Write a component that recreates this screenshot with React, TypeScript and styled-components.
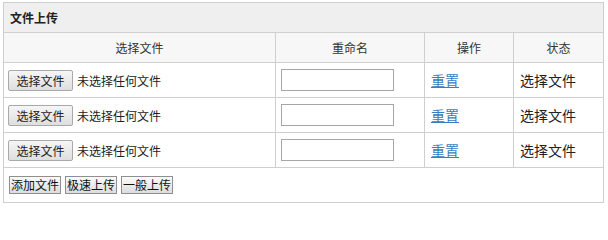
import styled, { createGlobalStyle } from "styled-components";

const GlobalStyle = createGlobalStyle`
  html, body {
    margin: 0;
    padding: 0;
    background: #fff;
  }
  body {
    font-family: "Noto Sans CJK SC", "Liberation Sans", sans-serif;
    font-size: 12px;
    color: #333;
  }
`;

const Page = styled.div`
  padding: 2px 0 0 3px;
`;

const Table = styled.table`
  width: 600px;
  border-collapse: collapse;
  table-layout: fixed;
  border: 1px solid #cfcfcf;
`;

const TitleCell = styled.th`
  height: 29px;
  padding: 0 6px;
  text-align: left;
  font-weight: bold;
  font-size: 12px;
  color: #222;
  background: #efefef;
  border: 1px solid #cfcfcf;
`;

const HeadCell = styled.th`
  height: 29px;
  padding: 0;
  text-align: center;
  font-weight: normal;
  font-size: 12px;
  color: #333;
  background: #f7f7f7;
  border: 1px solid #cfcfcf;
`;

const Cell = styled.td<{ $pad?: number; $size?: number }>`
  height: 34px;
  padding: 0 0 0 ${({ $pad }) => $pad ?? 6}px;
  border: 1px solid #cfcfcf;
  vertical-align: middle;
  font-size: ${({ $size }) => $size ?? 12}px;
  color: #222;
  white-space: nowrap;
`;

const FootCell = styled.td`
  height: 34px;
  padding: 0 0 0 5px;
  border: 1px solid #cfcfcf;
  vertical-align: middle;
`;

const FilePick = styled.span`
  display: inline-flex;
  align-items: center;
  gap: 4px;
`;

const FileButton = styled.button`
  width: 65px;
  height: 21px;
  padding: 0;
  font-family: inherit;
  font-size: 12px;
  color: #222;
  border: 1px solid #a9a9a9;
  border-radius: 2px;
  background: linear-gradient(#f6f6f6, #dedede);
`;

const NameInput = styled.input`
  box-sizing: border-box;
  width: 113px;
  height: 22px;
  margin: 0;
  border: 1px solid #a6a6a6;
  background: #fff;
  font-family: inherit;
  font-size: 12px;
`;

const ResetLink = styled.a`
  color: #3a7cc0;
  text-decoration: underline;
  cursor: pointer;
`;

const Actions = styled.div`
  display: flex;
  gap: 4px;
`;

const ActionButton = styled.button`
  height: 18px;
  padding: 0 1px;
  font-family: inherit;
  font-size: 12px;
  line-height: 16px;
  color: #111;
  border: 1px solid #8f8f8f;
  border-radius: 0;
  background: linear-gradient(#fbfbfb, #dcdcdc);
`;

const rows = [0, 1, 2];

export default function App() {
  return (
    <>
      <GlobalStyle />
      <Page>
        <Table>
          <colgroup>
            <col style={{ width: 272 }} />
            <col style={{ width: 149 }} />
            <col style={{ width: 89 }} />
            <col style={{ width: 90 }} />
          </colgroup>
          <thead>
            <tr>
              <TitleCell colSpan={4}>文件上传</TitleCell>
            </tr>
            <tr>
              <HeadCell>选择文件</HeadCell>
              <HeadCell>重命名</HeadCell>
              <HeadCell>操作</HeadCell>
              <HeadCell>状态</HeadCell>
            </tr>
          </thead>
          <tbody>
            {rows.map((i) => (
              <tr key={i}>
                <Cell $pad={4}>
                  <FilePick>
                    <FileButton type="button">选择文件</FileButton>
                    未选择任何文件
                  </FilePick>
                </Cell>
                <Cell $pad={5}>
                  <NameInput type="text" />
                </Cell>
                <Cell $size={14}>
                  <ResetLink>重置</ResetLink>
                </Cell>
                <Cell $size={14}>选择文件</Cell>
              </tr>
            ))}
            <tr>
              <FootCell colSpan={4}>
                <Actions>
                  <ActionButton type="button">添加文件</ActionButton>
                  <ActionButton type="button">极速上传</ActionButton>
                  <ActionButton type="button">一般上传</ActionButton>
                </Actions>
              </FootCell>
            </tr>
          </tbody>
        </Table>
      </Page>
    </>
  );
}
